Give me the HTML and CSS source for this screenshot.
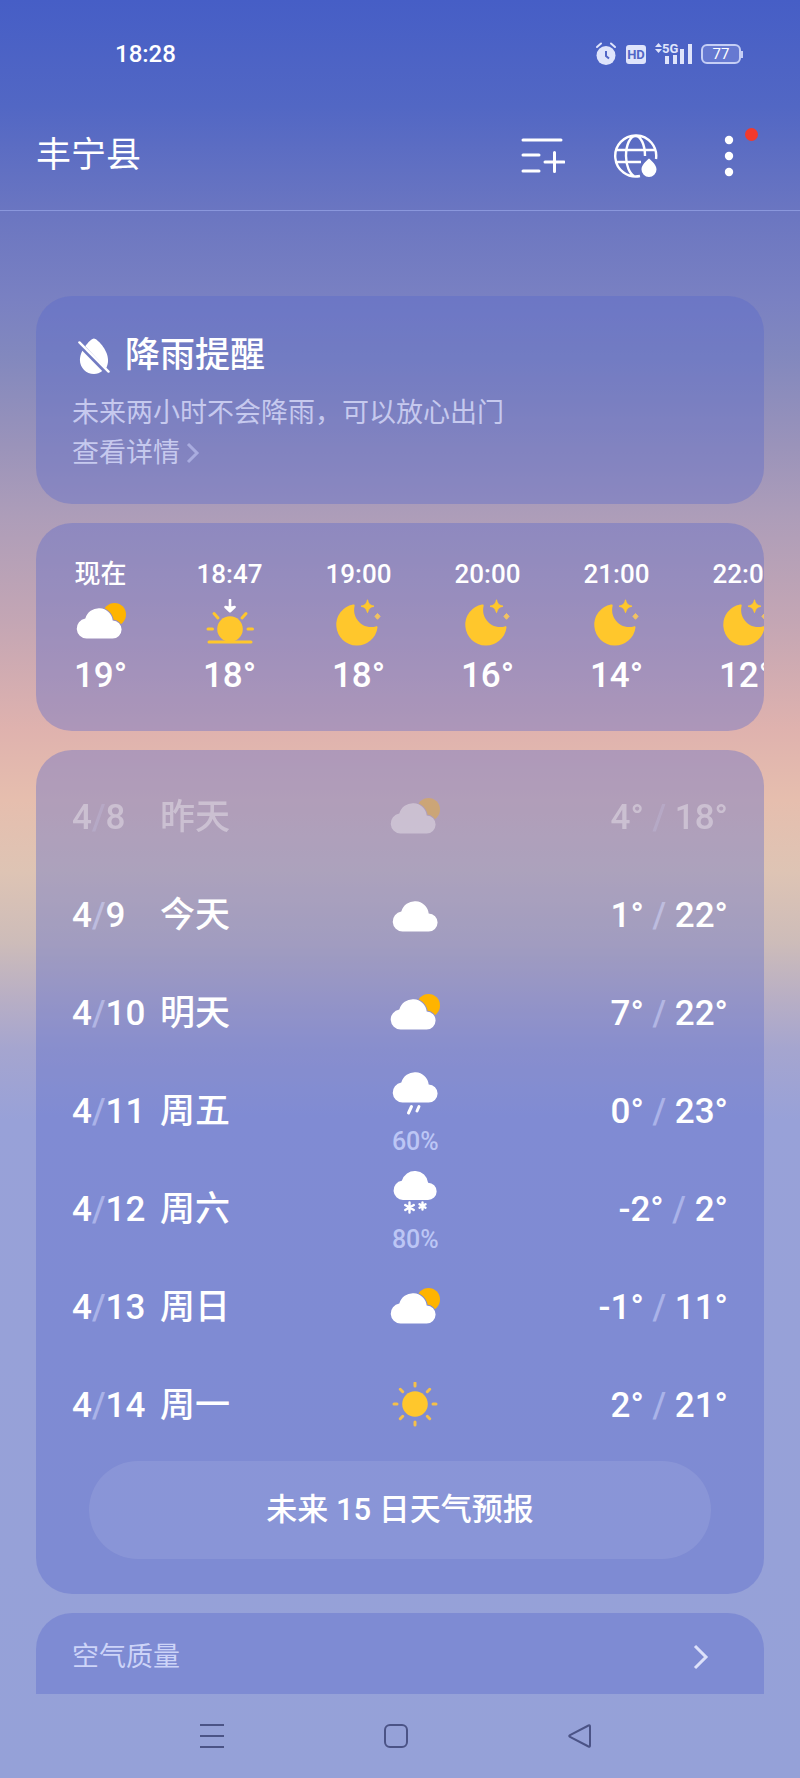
FILE: index.html
```html
<!DOCTYPE html>
<html lang="zh-CN">
<head>
<meta charset="UTF-8" />
<meta name="viewport" content="width=device-width, initial-scale=1" />
<title>丰宁县天气</title>
<link rel="stylesheet" href="styles.css">
</head>
<body>

<!-- shared weather icons -->
<svg class="sprite" aria-hidden="true">
  <defs>
    <path id="puff" d="M13.500 39.500a10 10 0 0 1-1.200-19.900a14 14 0 0 1 27.400 1.900a9 9 0 0 1-.2 18z"/>
    <mask id="behind-cloud" maskUnits="userSpaceOnUse" x="0" y="0" width="52" height="48">
      <rect width="52" height="48" fill="#fff"/>
      <use href="#puff" x="-2" fill="#000" stroke="#000" stroke-width="2"/>
    </mask>
  </defs>
  <symbol id="cloud" viewBox="0 0 52 48">
    <use href="#puff" fill="#fff"/>
  </symbol>
  <symbol id="partly" viewBox="0 0 52 48">
    <circle cx="39.500" cy="15.500" r="11.500" fill="#ffb400" mask="url(#behind-cloud)"/>
    <use href="#puff" x="-2" fill="#fff"/>
  </symbol>
  <symbol id="rain" viewBox="0 0 52 48">
    <use href="#puff" y="-5" fill="#fff"/>
    <path d="M22.500 38.500l-3 6.500M30 38.500l-2 4.500" stroke="#fff" stroke-width="3" stroke-linecap="round"/>
  </symbol>
  <symbol id="snow" viewBox="0 0 52 48">
    <use href="#puff" transform="translate(1 -4) scale(.96)" fill="#fff"/>
    <path d="M20.500 36.500v10M16.200 39l8.600 5M16.200 44l8.600-5M33.500 36.500v7M30.500 38.200l6 3.500M30.500 41.700l6-3.500" stroke="#fff" stroke-width="2.400" stroke-linecap="round"/>
  </symbol>
  <symbol id="sun" viewBox="0 0 52 48">
    <circle cx="26" cy="22" r="12.800" fill="#ffc72c"/>
    <path d="M26 1v3M26 40v3M5 22h3M44 22h3M11.300 7.300l2.400 2.400M38.300 34.300l2.400 2.400M11.300 36.700l2.400-2.400M38.300 9.700l2.400-2.400" stroke="#f5c04a" stroke-width="3" stroke-linecap="round"/>
  </symbol>
  <symbol id="sunset" viewBox="0 0 52 48">
    <circle cx="26" cy="30" r="12.800" fill="#ffc72c"/>
    <path d="M5 43h42M4 30h4.500M44 30h4.500M10 14.500l4 4.500M42 14.500l-4 4.500" stroke="#ffc72c" stroke-width="3" stroke-linecap="round"/>
    <path d="M26 1v9M21.500 8l4.500 4.200 4.500-4.200L26 9z" fill="#fff" stroke="#fff" stroke-width="2.600" stroke-linecap="round" stroke-linejoin="round"/>
  </symbol>
  <symbol id="moon" viewBox="0 0 52 48">
    <path d="M20 5.500A20.700 20.700 0 1 0 44.500 28.500c.1-1.200-.8-1.500-1.800-1.100A17 17 0 0 1 21.600 7c.4-1.100-.3-1.800-1.600-1.500z" fill="#ffc72c"/>
    <path d="M34.500 .8c1 4.200 2.500 5.400 6.500 6.400c-4 1-5.500 2.400-6.500 6.400c-1-4-2.500-5.400-6.500-6.400c4-1 5.500-2.200 6.500-6.400z" fill="#ffc72c" stroke="#ffc72c"/>
    <path d="M44.500 14.500l2.600 2.900-2.600 2.900-2.600-2.900z" fill="#f1c262" stroke="#f1c262"/>
  </symbol>
</svg>

<div class="status-bar">
  <time class="clock">18:28</time>
  <div class="status-icons">
    <svg width="22" height="24" viewBox="0 0 22 24">
      <circle cx="11" cy="13.500" r="9.500" fill="#dfe4fb"/>
      <path d="M2 5l4-3.500M20 5l-4-3.500" stroke="#dfe4fb" stroke-width="2" stroke-linecap="round"/>
      <path d="M11 9v5l3 2.500" fill="none" stroke="#5266c6" stroke-width="2"/>
    </svg>
    <span class="hd">HD</span>
    <svg width="37" height="24" viewBox="0 0 37 24">
      <path d="M0 5l3.500-4L7 5zM0 7l3.500 4L7 7z" fill="#dfe4fb"/>
      <text x="7" y="11" class="network">5G</text>
      <path d="M10 14h4v8h-4zM18 13h4v9h-4zM25 7h4v15h-4zM33 2h4v20h-4z" fill="#dfe4fb"/>
    </svg>
    <span class="battery">77</span>
  </div>
</div>

<header class="header">
  <h1>丰宁县</h1>
  <nav class="actions">
    <button aria-label="城市管理">
      <svg width="44" height="44" viewBox="0 0 44 44" fill="none" stroke="#fff" stroke-width="3" stroke-linecap="round">
        <path d="M2 6h38M2 21h16M2 37h16M24 28h19M33.500 18.500v19"/>
      </svg>
    </button>
    <button aria-label="降水地图">
      <svg width="44" height="44" viewBox="0 0 44 44" fill="none" stroke="#fff" stroke-width="2.400">
        <path d="M42 25a20.500 20.500 0 1 0-16 17M3 16h38M3 28h24M31 22c0-11-4-20-9.500-20s-9.500 9-9.500 20c0 10 4 18 8 20"/>
        <path d="M35 24.500c3 2.500 7.500 6.500 7.500 11a7.500 7.500 0 0 1-15 0c0-4.500 4.500-8.500 7.500-11z" fill="#fff" stroke="none"/>
      </svg>
    </button>
    <button class="more" aria-label="更多">
      <svg width="44" height="44" viewBox="0 0 44 44" fill="#fff">
        <circle cx="22" cy="6" r="4.200"/><circle cx="22" cy="22" r="4.200"/><circle cx="22" cy="38" r="4.200"/>
      </svg>
      <span class="dot"></span>
    </button>
  </nav>
</header>

<main class="content">
  <section class="card rain-alert">
    <h2>
      <svg width="33" height="37" viewBox="0 0 34 38">
        <path d="M8.500 8.500c3-4 6.500-8 9-8c3 0 14.500 11.500 14.500 22c0 3.500-.8 6-2 8.500zM5.500 13C4 16 3 19.300 3 22.500C3 30.500 9.500 37 17.500 37c3.200 0 6-.8 8.500-3z" fill="#fff"/>
        <path d="M2.500 4.500l30 30" stroke="#fff" stroke-width="2.500" stroke-linecap="round"/>
      </svg>
      降雨提醒
    </h2>
    <p>未来两小时不会降雨，可以放心出门</p>
    <a href="#">查看详情
      <svg width="14" height="22" viewBox="0 0 14 22" fill="none" stroke="#a9acdf" stroke-width="3">
        <path d="M2 2l9 9-9 9"/>
      </svg>
    </a>
  </section>

  <section class="card hourly">
    <div class="hour">
      <time>现在</time>
      <svg class="icon"><use href="#partly"/></svg>
      <span class="temp">19°</span>
    </div>
    <div class="hour">
      <time>18:47</time>
      <svg class="icon"><use href="#sunset"/></svg>
      <span class="temp">18°</span>
    </div>
    <div class="hour">
      <time>19:00</time>
      <svg class="icon"><use href="#moon"/></svg>
      <span class="temp">18°</span>
    </div>
    <div class="hour">
      <time>20:00</time>
      <svg class="icon"><use href="#moon"/></svg>
      <span class="temp">16°</span>
    </div>
    <div class="hour">
      <time>21:00</time>
      <svg class="icon"><use href="#moon"/></svg>
      <span class="temp">14°</span>
    </div>
    <div class="hour">
      <time>22:00</time>
      <svg class="icon"><use href="#moon"/></svg>
      <span class="temp">12°</span>
    </div>
  </section>

  <section class="card daily">
    <ul>
      <li class="day past">
        <span class="date">4<i>/</i>8</span><span class="name">昨天</span>
        <span class="sky"><svg class="icon"><use href="#partly"/></svg></span>
        <span class="range">4° <i>/</i> 18°</span>
      </li>
      <li class="day">
        <span class="date">4<i>/</i>9</span><span class="name">今天</span>
        <span class="sky"><svg class="icon"><use href="#cloud"/></svg></span>
        <span class="range">1° <i>/</i> 22°</span>
      </li>
      <li class="day">
        <span class="date">4<i>/</i>10</span><span class="name">明天</span>
        <span class="sky"><svg class="icon"><use href="#partly"/></svg></span>
        <span class="range">7° <i>/</i> 22°</span>
      </li>
      <li class="day">
        <span class="date">4<i>/</i>11</span><span class="name">周五</span>
        <span class="sky"><svg class="icon"><use href="#rain"/></svg><small>60%</small></span>
        <span class="range">0° <i>/</i> 23°</span>
      </li>
      <li class="day">
        <span class="date">4<i>/</i>12</span><span class="name">周六</span>
        <span class="sky"><svg class="icon"><use href="#snow"/></svg><small>80%</small></span>
        <span class="range">-2° <i>/</i> 2°</span>
      </li>
      <li class="day">
        <span class="date">4<i>/</i>13</span><span class="name">周日</span>
        <span class="sky"><svg class="icon"><use href="#partly"/></svg></span>
        <span class="range">-1° <i>/</i> 11°</span>
      </li>
      <li class="day">
        <span class="date">4<i>/</i>14</span><span class="name">周一</span>
        <span class="sky"><svg class="icon"><use href="#sun"/></svg></span>
        <span class="range">2° <i>/</i> 21°</span>
      </li>
    </ul>
    <button class="forecast-btn">未来 15 日天气预报</button>
  </section>

  <a class="card air" href="#">
    <span>空气质量</span>
    <svg width="16" height="26" viewBox="0 0 16 26" fill="none" stroke="#dde1fa" stroke-width="3">
      <path d="M2 2l11 11L2 24"/>
    </svg>
  </a>
</main>

<footer class="nav-bar">
  <button aria-label="最近任务">
    <svg width="26" height="26" viewBox="0 0 26 26" fill="none" stroke="#4b5386" stroke-width="2">
      <path d="M1 2h24M1 13h24M1 24h24"/>
    </svg>
  </button>
  <button aria-label="主屏幕">
    <svg width="26" height="26" viewBox="0 0 26 26" fill="none" stroke="#4b5386" stroke-width="2">
      <rect x="2" y="2" width="22" height="22" rx="5"/>
    </svg>
  </button>
  <button aria-label="返回">
    <svg width="26" height="26" viewBox="0 0 26 26" fill="none" stroke="#4b5386" stroke-width="2" stroke-linejoin="round">
      <path d="M21.500 2.500L3 12.200q-1.500.8 0 1.600L21.500 23.500q1.500.6 1.500-1v-19q0-1.600-1.500-1z"/>
    </svg>
  </button>
</footer>

</body>
</html>
```

FILE: styles.css
```css
* {
  box-sizing: border-box;
}
body {
  margin: 0;
  height: 100vh;
  display: flex;
  flex-direction: column;
  overflow: hidden;
  font-family: Roboto, "Noto Sans CJK SC", sans-serif;
  color: #fff;
  background: linear-gradient(
    #465ec6 0%,
    #5267c4 6%,
    #6b76c1 12%,
    #7a81c2 17%,
    #8288be 20%,
    #9a93ba 25%,
    #ad9db9 29%,
    #c4a6b4 35%,
    #dfb2ae 41%,
    #e6beae 45%,
    #dec4b4 49%,
    #cdbcb9 53%,
    #b9afc4 56%,
    #a5a5cf 59%,
    #98a1d8 63%,
    #95a1d8 100%
  );
}
h1, h2, p, ul {
  margin: 0;
  padding: 0;
}
i {
  font-style: normal;
}
a {
  color: inherit;
  text-decoration: none;
}
button {
  border: none;
  padding: 0;
  background: none;
  color: inherit;
  font: inherit;
  cursor: pointer;
}
svg {
  display: block;
}
.sprite {
  position: absolute;
  width: 0;
  height: 0;
}
.status-bar {
  display: flex;
  flex: none;
  justify-content: space-between;
  align-items: center;
  height: 108px;
  padding: 0 59px 0 115px;
}
.clock {
  font-size: 24px;
  font-weight: 500;
}
.status-icons {
  display: flex;
  align-items: center;
  gap: 9px;
}
.hd {
  width: 20px;
  border-radius: 3px;
  background: #dfe4fb;
  color: #5266c6;
  font-size: 13px;
  font-weight: 700;
  line-height: 19px;
  text-align: center;
}
.network {
  fill: #dfe4fb;
  font-size: 13px;
  font-weight: 700;
}
.battery {
  position: relative;
  width: 40px;
  border: 2px solid #c5cef5;
  border-radius: 6px;
  background: #6679d1;
  font-size: 15px;
  line-height: 16px;
  text-align: center;
}
.battery::after {
  content: "";
  position: absolute;
  top: 5px;
  right: -4px;
  width: 2px;
  height: 7px;
  background: #c5cef5;
}
.header {
  display: flex;
  flex: none;
  justify-content: space-between;
  align-items: center;
  height: 103px;
  padding: 0 49px 7px 36px;
  border-bottom: 1px solid #8a97dc;
}
h1 {
  font-size: 35px;
  font-weight: 400;
  line-height: 40px;
}
.actions {
  display: flex;
  gap: 49px;
}
.more {
  position: relative;
}
.dot {
  position: absolute;
  top: -6px;
  right: -7px;
  width: 13px;
  height: 13px;
  border-radius: 50%;
  background: #f23a2c;
}
.content {
  display: flex;
  flex: 1;
  flex-direction: column;
  gap: 19px;
  min-height: 0;
  padding: 85px 36px 0;
  overflow: hidden;
}
.card {
  flex: none;
  border-radius: 36px;
  background: rgba(88, 102, 203, 0.37);
}
.rain-alert {
  height: 208px;
  padding: 34px 36px;
  font-size: 27px;
  line-height: 40px;
  color: #c6c9ee;
}
.rain-alert h2 {
  display: flex;
  align-items: center;
  gap: 15px;
  margin-bottom: 11px;
  padding-left: 5px;
  color: #fff;
  font-size: 35px;
  font-weight: 500;
  line-height: 52px;
}
.rain-alert a {
  display: flex;
  align-items: center;
  gap: 6px;
}
.hourly {
  display: flex;
  height: 208px;
  overflow-x: auto;
  scrollbar-width: none;
}
.hour {
  display: flex;
  flex: none;
  flex-direction: column;
  align-items: center;
  width: 129px;
  padding-top: 34px;
  font-size: 26px;
  font-weight: 500;
  line-height: 34px;
}
.icon {
  width: 52px;
  height: 48px;
}
.hour .icon {
  margin: 8px 0 9px;
}
.temp {
  font-size: 35px;
  line-height: 40px;
}
.daily {
  padding: 19px 36px 35px;
}
.day {
  display: grid;
  grid-template-columns: 88px 4fr 52px 5fr;
  align-items: center;
  height: 98px;
  font-size: 35px;
  font-weight: 500;
  line-height: 40px;
  white-space: nowrap;
}
.day i {
  color: rgba(214, 219, 255, 0.5);
}
.past {
  opacity: 0.35;
}
.sky {
  display: flex;
  flex-direction: column;
  align-items: center;
  gap: 12px;
}
.sky small {
  color: #bcc6f5;
  font-size: 25px;
  line-height: 28px;
}
.range {
  text-align: right;
}
.forecast-btn {
  display: block;
  width: calc(100% - 34px);
  height: 98px;
  margin: 6px auto 0;
  border-radius: 49px;
  background: rgba(255, 255, 255, 0.09);
  font-size: 31px;
  font-weight: 500;
  line-height: 40px;
}
.air {
  display: flex;
  justify-content: space-between;
  align-items: center;
  height: 208px;
  padding: 0 55px 120px 36px;
  color: #cdd4f8;
  font-size: 27px;
  line-height: 30px;
}
.nav-bar {
  display: flex;
  flex: none;
  justify-content: center;
  align-items: center;
  gap: 134px;
  height: 84px;
  padding-right: 9px;
}
.nav-bar button {
  padding: 12px;
}
```
